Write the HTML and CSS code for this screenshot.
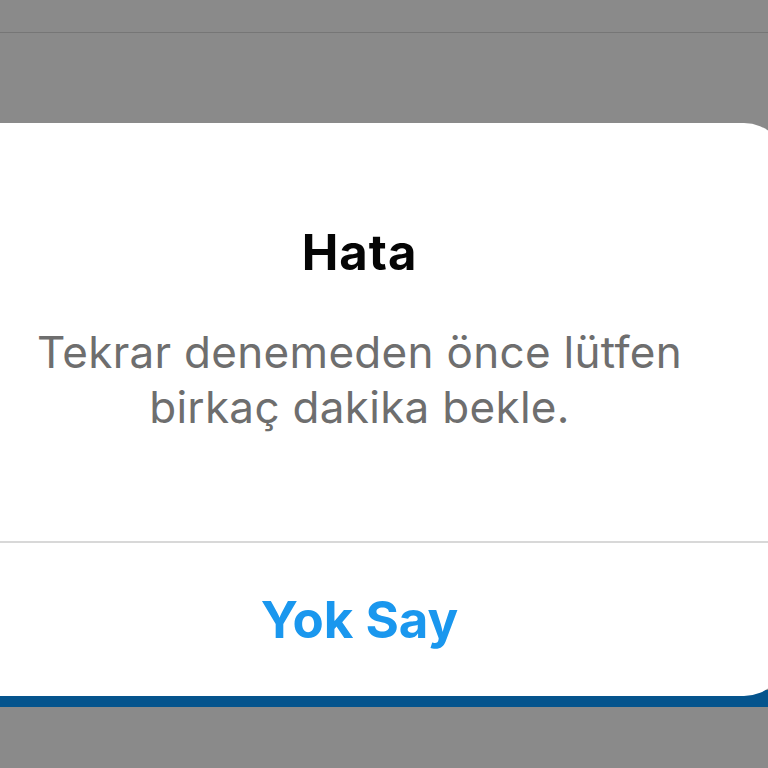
FILE: index.html
```html
<!DOCTYPE html>
<html lang="tr">
<head>
    <meta charset="UTF-8">
    <meta name="viewport" content="width=device-width, initial-scale=1.0">
    <title>Hata</title>
    <link rel="stylesheet" href="styles.css">
</head>
<body>
    <div class="top-bar"></div>
    <div class="alert">
        <div class="alert-content">
            <h2 class="alert-title">Hata</h2>
            <p class="alert-message">Tekrar denemeden önce lütfen<br>birkaç dakika bekle.</p>
        </div>
        <button class="alert-button">Yok Say</button>
    </div>
    <div class="page-strip"></div>
</body>
</html>
```

FILE: styles.css
```css
body {
    margin: 0;
    padding: 0;
    height: 768px;
    overflow: hidden;
    font-family: Inter, "Noto Sans", sans-serif;
    background-color: #8a8a8a; /* karartılmış arka plan */
}
.top-bar {
    height: 32px;
    border-bottom: 1px solid #767676;
}
.alert {
    position: relative;
    z-index: 1;
    margin-top: 90px;
    margin-left: -67px;
    width: 853px;
    background-color: #fff;
    border-radius: 42px;
}
.alert-content {
    padding: 102px 0 106px;
    text-align: center;
    border-bottom: 2px solid #d8d8d8;
}
.alert-title {
    margin: 0;
    font-size: 49px;
    line-height: 56px;
    font-weight: 700;
    letter-spacing: 1px;
    color: #050505;
}
.alert-message {
    margin: 44px 0 0;
    font-size: 44px;
    line-height: 55px;
    font-weight: 400;
    letter-spacing: 0.3px;
    color: #6e6e6e;
}
.alert-button {
    display: flex;
    align-items: center;
    justify-content: center;
    width: 100%;
    height: 153px;
    padding: 0;
    border: none;
    background: none;
    font-family: inherit;
    font-size: 51px;
    font-weight: 700;
    color: #1a97ee;
}
.page-strip {
    margin-top: -6px;
    height: 17px;
    background-color: #04548d;
}
```
